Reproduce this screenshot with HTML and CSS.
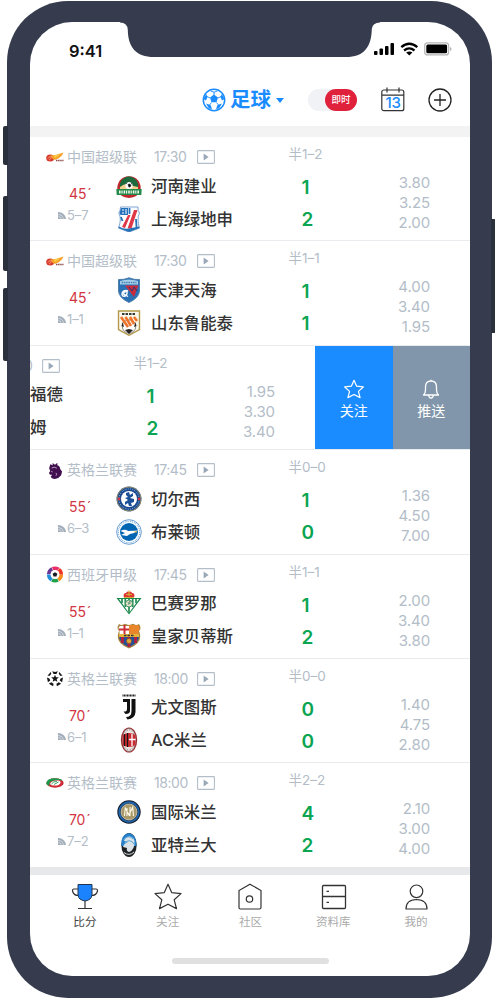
FILE: index.html
```html
<!DOCTYPE html>
<html lang="zh-CN">
<head>
<meta charset="utf-8">
<title>足球比分</title>
<link rel="stylesheet" href="styles.css">
</head>
<body>
<svg class="defs" width="0" height="0" aria-hidden="true">
  <symbol id="play" viewBox="0 0 18 14"><rect x=".6" y=".6" width="16.8" height="12.8" rx=".6" fill="none" stroke="#b4bec9" stroke-width="1.1"/><path d="M6.6 3.6 11.6 7 6.6 10.4z" fill="#98a8b8"/></symbol>
  <symbol id="corner" viewBox="0 0 8 7"><path d="M0 0C4.500 0 7.500 3 8 7H0z" fill="#a3aebb"/><path d="M.3 2.400Q4.500 2.600 5.600 6.800M.3 4.600Q2.800 4.600 3.300 6.800" fill="none" stroke="#fff" stroke-width=".5"/></symbol>
  <symbol id="star" viewBox="0 0 28 27"><path d="M14 1.300 17.700 9.600 27 10.600 20.200 16.800 22.500 25.600 14 21.200 5.500 25.600 7.800 16.800 1 10.600 10.300 9.600z" fill="none" stroke="currentColor" stroke-linejoin="round"/></symbol>
  <symbol id="csl" viewBox="0 0 18 10"><ellipse cx="4.200" cy="6" rx="4" ry="3.600" fill="#d93a2f"/><path d="M4 3.500Q8 4 17.500.5 16 5 10 7.500 7 8.500 6 6z" fill="#f5a32b"/><path d="M2 6.500Q3 4 5.500 5M3 8 5.500 6" stroke="#ffc78a" stroke-width=".7" fill="none"/><path d="M8 3.800 14 2.500 9 5.500z" fill="#ffdf51"/><path d="M10 8.600H17.500" stroke="#8a4b46" stroke-width="1.500" stroke-dasharray="1.500 .6"/></symbol>
  <symbol id="epl" viewBox="0 0 18 18"><path d="M4 2.500 6.500 3.500 6.500 1 9 2.800 11.500.8 11.500 3.500Q14.500 4.500 14.500 7.500L16.500 10 15.500 14Q13 17.500 9 18 5 17.500 4.500 15.500L6 13.500Q2.500 14 2.800 11L4 9.500 2.800 6.500z" fill="#42104f"/><path d="M5.500 6.500Q8 4.500 11 6.500M10 11.500Q11.500 13 10 14.500M5 10 6.500 10.500" stroke="#d9c8de" stroke-width=".8" fill="none"/></symbol>
  <symbol id="laliga" viewBox="0 0 18 18"><g fill="none" stroke-width="4" stroke-dasharray="6.400 34.440"><circle cx="9" cy="9" r="6.500" stroke="#f98b1d"/><circle cx="9" cy="9" r="6.500" stroke="#20a04b" stroke-dashoffset="-6.800"/><circle cx="9" cy="9" r="6.500" stroke="#1d8edb" stroke-dashoffset="-13.600"/><circle cx="9" cy="9" r="6.500" stroke="#663690" stroke-dashoffset="-20.400"/><circle cx="9" cy="9" r="6.500" stroke="#e92e68" stroke-dashoffset="-27.200"/><circle cx="9" cy="9" r="6.500" stroke="#ee3524" stroke-dashoffset="-34"/></g><circle cx="9" cy="9" r="4.700" fill="#fff"/><path d="M9 6.500 11.500 8.300 10.500 11.200H7.500L6.500 8.300z" fill="#191c23"/></symbol>
  <symbol id="ucl" viewBox="0 0 18 18"><g fill="#161616"><path d="m9 5 1.100 2.600 2.900.2-2.200 1.900.7 2.800L9 11l-2.500 1.500.7-2.800L5 7.800l2.900-.2z"/><path d="M6 1.200 9 2.200 12 1.200 10.500 4.200h-3zM13.500 2 17 6 14.500 6 13 4zM4.500 2 1 6 3.500 6 5 4zM17.500 8 16.500 13 14 11 15 9zM.5 8 1.500 13 4 11 3 9zM13 13 15.500 14.500 11 17.200 10.500 14.500zM5 13 2.500 14.500 7 17.200 7.500 14.500z"/></g></symbol>
  <symbol id="seriea" viewBox="0 0 18 10"><ellipse cx="9" cy="5" rx="8.700" ry="4.700" fill="#cf2b37"/><path d="M.3 5Q1 .3 9 .3 15 .5 16.500 2.500 9 1 4 4 3 6 3.500 7.800.3 7 .3 5z" fill="#189b4c"/><path d="M4 6Q5 2.300 12 2.500 15 3 14.500 5 13 8 8 7.500 5 7.500 4 6z" fill="#fff"/><path d="M5.500 6Q7 3.500 11 3.300M8 6.500 12.500 4" stroke="#3aa364" fill="none"/></symbol>

  <symbol id="henan" viewBox="0 0 26 26"><path d="M1.500 17A11.700 11.700 0 1 1 24.500 17Q22 24.500 13 25 4 24.500 1.500 17z" fill="#c1272d"/><path d="M13 3.600A9.300 9.300 0 0 0 4.300 16L21.700 16A9.300 9.300 0 0 0 13 3.600z" fill="#1d6b3c"/><path d="M4 14Q9 10 13 11.500T22 14V17H4z" fill="#f4cf8d"/><circle cx="13" cy="12.500" r="3.600" fill="#fff"/><path d="m12 11.500 2-.5 1 2-2 1.200zM10 11 11.500 9.500M15 9.500 16 11.500" stroke="#242424" stroke-width=".7"/><path d="M.3 16H25.700L25.300 22H.7z" fill="#24884a"/><path d="M3 19H23" stroke="#edf8e8" stroke-width="2.800" stroke-dasharray="1.600 .8 1.200 1"/></symbol>
  <symbol id="shenhua" viewBox="0 0 26 26"><path d="M4.500 1H22Q21.500 5 23.500 7 20.500 13 23.500 22 19 24 13 26 7 24 2.500 22 6 13 2.800 7 4.500 5 4.500 1z" fill="#fff" stroke="#5b91c6" stroke-width=".8"/><path d="M5 2H12V9H4.500L3.500 7z" fill="#2671bd"/><path d="M6 4H8M6 7H8M10 3V8" stroke="#fff"/><path d="m6 21 6-12h2.500L9 22zM11.500 22.500 18 4h3.500L15.500 22.500z" fill="#e13848"/><path d="m5 11 1.500 4M20 13l.5 8M13.500 2v6" stroke="#2872bb" stroke-width="1.800"/><path d="M3 20.500Q8 23.500 13 22.500T23 20.500L23.500 22 13 26 2.500 22z" fill="#2771b7"/></symbol>
  <symbol id="tianhai" viewBox="0 0 26 26"><path d="M2.500 2.500Q8 3 13 .8 18 3 23.500 2.500V14Q23 21 13 25.500 3 21 2.500 14z" fill="#2a70b5" stroke="#5180a9"/><path d="M4 4Q13 1 22 4V7.500H4z" fill="#a6d0ea"/><path d="M5.500 5.500H20.500" stroke="#4b83b4" stroke-width="1.300" stroke-dasharray="1.600 .7"/><path d="M9 8.500H22.500L18 20z" fill="#c92d3d"/><path d="m13 10 3 4 2-4 3 4" fill="none" stroke="#293675"/><path d="M12 14C9 12.500 6 14 6 17S10 20 11 16.500 7.500 14.500 7.500 17l4.500 2.500" fill="none" stroke="#fff" stroke-width="1.400"/></symbol>
  <symbol id="luneng" viewBox="0 0 26 26"><path d="M2.500 1H23.500V19.500L13 25.300 2.500 19.500z" fill="#faf8eb" stroke="#b39a4c" stroke-width="1.400"/><path d="M6 4H20" stroke="#353a3b" stroke-width="2.200" stroke-dasharray="2.500 1"/><circle cx="13" cy="16.500" r="6.700" fill="#fff" stroke="#444" stroke-width=".6"/><path d="M6.500 12 8 17 5.500 16zM19.500 12 18 17 20.500 16zM9 20l4-1 4 1-4 4z" fill="#292322"/><path d="m5 7 7 10M9.500 7l5.500 9M14 7l4 7M18 7l3 4" fill="none" stroke="#ee742c" stroke-width="2.600"/></symbol>
  <symbol id="chelsea" viewBox="0 0 26 26"><circle cx="13" cy="13" r="12.500" fill="#194a90"/><circle cx="13" cy="13" r="12" fill="none" stroke="#c7a85a" stroke-width=".7"/><circle cx="13" cy="13" r="10.100" fill="none" stroke="#a9bddc" stroke-width="1" stroke-dasharray="1 1.300"/><circle cx="13" cy="13" r="8" fill="#fff"/><path d="m10 7 3-1 1 3 3-2v3l-3 2 4 1v3l-3 1 1 3h-3l-1-3-3 2v-3l3-2-3-2 3-1-2-2z" fill="#1b5099"/><circle cx="3" cy="13" r="1.400" fill="#cf3344"/><circle cx="23" cy="13" r="1.400" fill="#cf3344"/></symbol>
  <symbol id="brighton" viewBox="0 0 26 26"><circle cx="13" cy="13" r="12.300" fill="#fff" stroke="#2871bf" stroke-width=".7"/><circle cx="13" cy="13" r="10.700" fill="none" stroke="#78acdb" stroke-width="1.100" stroke-dasharray="1 .9"/><circle cx="13" cy="13" r="9" fill="#0066b3"/><path d="M4.500 12Q9 9.500 12 12L22 11.500 18 14 14 15 11 17 5 16 9 14z" fill="#fff"/><path d="m18 13 3-.2" stroke="#e3b342"/></symbol>
  <symbol id="betis" viewBox="0 0 26 26"><path d="M.5 8H25.500L13 24.500z" fill="#19864b"/><path d="M3 9H23L13 23z" fill="#fff"/><path d="M6 9v4M9.300 9v8M13 9v14M16.700 9v8M20 9v4" stroke="#258c50" stroke-width="1.700"/><circle cx="13" cy="13.500" r="3.500" fill="#e8e2ca" stroke="#238a52" stroke-width=".8"/><path d="m11.500 12 2.500 2v-3l-2 4" fill="none" stroke="#4b8065" stroke-width=".7"/><path d="M8 7.500Q6.500 3 10 3 11 .5 13 2 15 .5 16 3 19.500 3 18 7.500z" fill="#dc3833"/><path d="M8 7.500H18M10 4.500H16M13 .5V6" stroke="#dda936" stroke-width="1.200"/></symbol>
  <symbol id="barca" viewBox="0 0 26 26"><path d="M3 1Q6 3 9 .8 13 3 17 .8 20 3 23 1 26 5 23 8 28 20 13 25.500-2 20 3 8 0 5 3 1z" fill="#a7843f"/><path d="M4 3H13V11H3.500V8Q1.500 5 4 3z" fill="#fff"/><path d="M8.500 2V11M3 6.500H13" stroke="#ce2d35" stroke-width="2"/><path d="M13 2H22Q25 5 22.500 8V11H13z" fill="#e9852b"/><path d="M3 13H23Q23 20 13 24 3 20 3 13z" fill="#20519b"/><path d="M6.500 13v7M13 13v11M19.500 13v7" stroke="#ac2244" stroke-width="3"/><path d="M3 11H23V14H3z" fill="#e3b33b"/><path d="M8 12.500H18" stroke="#333" stroke-width="1.500" stroke-dasharray="2.500 1"/><circle cx="13" cy="18" r="2.600" fill="#e1a637" stroke="#704a2d" stroke-width=".6"/></symbol>
  <symbol id="juve" viewBox="0 0 26 26"><path d="M6.500 1.500H19.500" stroke="#252525" stroke-width="2" stroke-dasharray="1.100 .4"/><path d="M7 5H14V17Q14 20 9.500 20L7.500 17.500Q11 18 11 15V8H7z" fill="#111"/><path d="M15.500 5H19.500V18Q19 25 11.500 25.500L10 23Q15.500 23 15.500 17z" fill="#111"/></symbol>
  <symbol id="milan" viewBox="0 0 26 26"><ellipse cx="13" cy="13" rx="8.200" ry="12.600" fill="#a42a2c"/><ellipse cx="13" cy="13" rx="7" ry="11.500" fill="#efe6e4" stroke="#444" stroke-width=".5"/><ellipse cx="13" cy="13" rx="5.900" ry="10" fill="none" stroke="#8c8280" stroke-width="1" stroke-dasharray="1.200 1.500"/><path d="M6.500 8Q13 4 19.500 8V18Q13 22 6.500 18z" fill="#c9292f"/><path d="M8.500 7v12M11.500 6v14" stroke="#171717" stroke-width="1.200"/><path d="M16 7v12M13 12.500h6.500" stroke="#fff" stroke-width="1.300"/></symbol>
  <symbol id="inter" viewBox="0 0 26 26"><circle cx="13" cy="13" r="11.700" fill="#151c29"/><circle cx="13" cy="13" r="9.700" fill="none" stroke="#2065ad" stroke-width="1.900"/><circle cx="13" cy="13" r="8" fill="#a9986a" stroke="#e6dfc4" stroke-width=".7"/><path d="m8.500 17 .8-8 3.700 7 3.700-8 .8 9M14 8v9M11 9v8" fill="none" stroke="#fff9e8" stroke-width="1.100"/></symbol>
  <symbol id="atalanta" viewBox="0 0 26 26"><ellipse cx="13" cy="13" rx="7.700" ry="12" fill="#202326"/><path d="M5.300 14Q5 2 13 1.100 20 2 20.700 14z" fill="#2580cc"/><path d="M8 9Q9 5 13 4.500 17.500 4.500 18.500 9 19 18 13 20 10 19 11 16L7 15Q8 11 12 10z" fill="#dce3e8"/><path d="M7.500 8Q12 2 17.500 7M9 11Q14 6 18 12" fill="none" stroke="#67a9d5" stroke-width="1.200"/><path d="M8 20.500Q13 24.500 18 20" stroke="#ddd" fill="none"/></symbol>
</svg>

<div class="stage">
  <i class="key key-mute"></i><i class="key key-up"></i><i class="key key-down"></i><i class="key key-power"></i>
  <div class="phone">
    <main class="screen">
      <svg class="notch" viewBox="0 0 260 36" aria-hidden="true"><path d="M0 0H260V.5Q252.500.5 251.800 7C251.500 25 244 35 226 35H34C16 35 8 25 7.800 8Q7.500.5 0 .5z"/></svg>
      <div class="status">
        <span class="clock">9:41</span>
        <svg class="status-icons" viewBox="0 0 78 14"><g fill="#000"><rect y="9" width="3.500" height="4" rx="1"/><rect x="5.500" y="6.500" width="3.500" height="6.500" rx="1"/><rect x="11" y="4" width="3.500" height="9" rx="1"/><rect x="16.500" y="1" width="3.500" height="12" rx="1"/><path d="M32.200 10.600Q35.300 8.400 38.400 10.600L35.300 13.400z"/></g><path d="M27.300 5.200Q35.300-1.700 43.300 5.200M30.100 8.500Q35.300 4.200 40.500 8.500" fill="none" stroke="#000" stroke-width="2.300"/><rect x="50.700" y=".9" width="24" height="12" rx="3" fill="#fff" stroke="#b5b5b5" stroke-width="1.200"/><rect x="52.300" y="2.500" width="20.800" height="8.800" rx="1.500"/><path d="M76 5q1.600.4 1.600 2T76 9z" fill="#b5b5b5"/></svg>
      </div>
      <header class="bar">
        <svg class="ball" viewBox="0 0 24 24"><circle cx="12" cy="12" r="10.700" fill="#fff" stroke="#1a8cff" stroke-width="1.500"/><path d="M8.500 3 12 4.200 15.500 3M12 4V7M16 10l3-1.500M14.500 14.500l2 2.500M9.500 14.500l-2 2.500M8 10 5 8.500" fill="none" stroke="#1a8cff" stroke-width=".9"/><path d="m12 6.500 4 3-1.500 4.800h-5L8 9.500zM19.800 6l2.700 5-2.500 1.500-1.500-3.500zM4.200 6l-2.700 5L4 12.500 5.500 9zM15.500 17l4.500-1.500L17 20.500 14 21zM8.500 17l-4.500-1.500L7 20.500l3 .5z" fill="#1a8cff"/></svg>
        <span class="sport">足球</span><i class="caret"></i>
        <span class="toggle"><b>即时</b></span>
        <span class="calendar"><svg viewBox="0 0 24 25"><rect x=".8" y="3" width="22" height="20.700" rx="2" fill="none" stroke="#333" stroke-width="1.200"/><path d="M1 8.200H23M6 .5V5.500M18 .5V5.500" stroke="#333" stroke-width="1.200"/></svg><em>13</em></span>
        <svg class="plus" viewBox="0 0 24 24"><circle cx="12" cy="12" r="11" fill="none" stroke="#222" stroke-width="1.300"/><path d="M6 12H18M12 6V18" stroke="#222" stroke-width="1.300"/></svg>
      </header>
      <section class="matches">
        <article class="match"><div class="card">
          <div class="info"><div class="league"><svg class="badge flat"><use href="#csl"/></svg><span class="lname">中国超级联</span><time>17:30</time><svg class="play"><use href="#play"/></svg></div>
            <div class="fixture"><div class="live"><b>45<i>´</i></b><span><svg><use href="#corner"/></svg>5–7</span></div><div class="teams"><p><svg><use href="#henan"/></svg>河南建业</p><p><svg><use href="#shenhua"/></svg>上海绿地申</p></div></div></div>
          <div class="score"><span>半1–2</span><b>1</b><b>2</b></div><div class="odds"><span>3.80</span><span>3.25</span><span>2.00</span></div>
        </div></article>
        <article class="match"><div class="card">
          <div class="info"><div class="league"><svg class="badge flat"><use href="#csl"/></svg><span class="lname">中国超级联</span><time>17:30</time><svg class="play"><use href="#play"/></svg></div>
            <div class="fixture"><div class="live"><b>45<i>´</i></b><span><svg><use href="#corner"/></svg>1–1</span></div><div class="teams"><p><svg><use href="#tianhai"/></svg>天津天海</p><p><svg><use href="#luneng"/></svg>山东鲁能泰</p></div></div></div>
          <div class="score"><span>半1–1</span><b>1</b><b>1</b></div><div class="odds"><span>4.00</span><span>3.40</span><span>1.95</span></div>
        </div></article>
        <article class="match swiped"><div class="card">
          <div class="info"><div class="league"><time>0</time><svg class="play"><use href="#play"/></svg></div>
            <div class="fixture"><div class="teams"><p>福德</p><p>姆</p></div></div></div>
          <div class="score"><span>半1–2</span><b>1</b><b>2</b></div><div class="odds"><span>1.95</span><span>3.30</span><span>3.40</span></div></div>
          <div class="action follow"><svg viewBox="0 0 28 27"><use href="#star"/></svg>关注</div>
          <div class="action push"><svg viewBox="0 0 18 20"><path d="M1.500 16Q3.500 14 3.500 11V8Q3.500 2 9 2T14.500 8V11Q14.500 14 16.500 16zM9 2V.8M6.700 16.500Q7 19 9 19T11.300 16.500" fill="none" stroke="#fff" stroke-width="1.300" stroke-linejoin="round"/></svg>推送</div>
        </article>
        <article class="match"><div class="card">
          <div class="info"><div class="league"><svg class="badge"><use href="#epl"/></svg><span class="lname">英格兰联赛</span><time>17:45</time><svg class="play"><use href="#play"/></svg></div>
            <div class="fixture"><div class="live"><b>55<i>´</i></b><span><svg><use href="#corner"/></svg>6–3</span></div><div class="teams"><p><svg><use href="#chelsea"/></svg>切尔西</p><p><svg><use href="#brighton"/></svg>布莱顿</p></div></div></div>
          <div class="score"><span>半0–0</span><b>1</b><b>0</b></div><div class="odds"><span>1.36</span><span>4.50</span><span>7.00</span></div>
        </div></article>
        <article class="match"><div class="card">
          <div class="info"><div class="league"><svg class="badge"><use href="#laliga"/></svg><span class="lname">西班牙甲级</span><time>17:45</time><svg class="play"><use href="#play"/></svg></div>
            <div class="fixture"><div class="live"><b>55<i>´</i></b><span><svg><use href="#corner"/></svg>1–1</span></div><div class="teams"><p><svg><use href="#betis"/></svg>巴赛罗那</p><p><svg><use href="#barca"/></svg>皇家贝蒂斯</p></div></div></div>
          <div class="score"><span>半1–1</span><b>1</b><b>2</b></div><div class="odds"><span>2.00</span><span>3.40</span><span>3.80</span></div>
        </div></article>
        <article class="match"><div class="card">
          <div class="info"><div class="league"><svg class="badge"><use href="#ucl"/></svg><span class="lname">英格兰联赛</span><time>18:00</time><svg class="play"><use href="#play"/></svg></div>
            <div class="fixture"><div class="live"><b>70<i>´</i></b><span><svg><use href="#corner"/></svg>6–1</span></div><div class="teams"><p><svg><use href="#juve"/></svg>尤文图斯</p><p><svg><use href="#milan"/></svg>AC米兰</p></div></div></div>
          <div class="score"><span>半0–0</span><b>0</b><b>0</b></div><div class="odds"><span>1.40</span><span>4.75</span><span>2.80</span></div>
        </div></article>
        <article class="match"><div class="card">
          <div class="info"><div class="league"><svg class="badge flat"><use href="#seriea"/></svg><span class="lname">英格兰联赛</span><time>18:00</time><svg class="play"><use href="#play"/></svg></div>
            <div class="fixture"><div class="live"><b>70<i>´</i></b><span><svg><use href="#corner"/></svg>7–2</span></div><div class="teams"><p><svg><use href="#inter"/></svg>国际米兰</p><p><svg><use href="#atalanta"/></svg>亚特兰大</p></div></div></div>
          <div class="score"><span>半2–2</span><b>4</b><b>2</b></div><div class="odds"><span>2.10</span><span>3.00</span><span>4.00</span></div>
        </div></article>
      </section>
      <nav class="tabs">
        <a class="active"><svg viewBox="0 0 28 28"><path d="M7 6H3Q1.300 6 1.500 8 2.500 12.500 7.500 12.500M21 6H25Q26.700 6 26.500 8 25.500 12.500 20.500 12.500M14 18V25.500M7 25.500H21" fill="none" stroke="#333" stroke-width="1.200"/><path d="M7 1.500H21V12Q20.500 17 14 18 7.500 17 7 12z" fill="#1a83fd" stroke="#24364d" stroke-width="1"/></svg>比分</a>
        <a><svg viewBox="0 0 28 28"><use href="#star" width="28" height="27"/></svg>关注</a>
        <a><svg viewBox="0 0 28 28"><path d="M14 1.300 25 7.500V24.500Q25 26 23.500 26H4.500Q3 26 3 24.500V7.500z" fill="none" stroke="#333" stroke-width="1.200"/><circle cx="13.500" cy="16" r="3.200" fill="none" stroke="#333" stroke-width="1.200"/></svg>社区</a>
        <a><svg viewBox="0 0 28 28"><path d="M4.500 2.500H25.500Q26.500 2.500 26.500 3.500V24.500Q26.500 25.500 25.500 25.500H4.500Q3.500 25.500 3.500 24.500V3.500Q3.500 2.500 4.500 2.500zM3.500 13.500H26.500M7.500 8.300H10M7.500 19.300H10" fill="none" stroke="#333" stroke-width="1.300"/></svg>资料库</a>
        <a><svg viewBox="0 0 28 28"><circle cx="14.500" cy="8.300" r="6.300" fill="none" stroke="#333" stroke-width="1.200"/><path d="M4 26Q4 16.800 14.500 16.500 25 16.800 25 26z" fill="none" stroke="#333" stroke-width="1.200" stroke-linejoin="round"/></svg>我的</a>
      </nav>
      <div class="home"></div>
    </main>
  </div>
</div>
</body>
</html>
```

FILE: styles.css
```css
* { box-sizing: border-box; }
body { margin: 0; background: #fff; font-family: Inter, "Noto Sans CJK SC", sans-serif; }
p { margin: 0; }
svg { display: block; flex: none; }
.defs { position: absolute; }
.stage { position: relative; width: 495px; height: 1002px; padding: 1px 3px 4px 7px; overflow: hidden; }
.phone { width: 485px; height: 997px; padding: 21px 22px 22px 23px; background: #363c4e; border-radius: 61px; }
.screen { position: relative; height: 954px; background: #fff; border-radius: 42px; overflow: hidden; display: flex; flex-direction: column; }
.key { position: absolute; left: 3px; width: 5px; background: #2b303d; border-radius: 2px 0 0 2px; }
.key-mute { top: 126px; height: 39px; }
.key-up { top: 196px; height: 75px; }
.key-down { top: 288px; height: 73px; }
.key-power { left: 491px; top: 219px; height: 114px; border-radius: 0 2px 2px 0; }
.notch { position: absolute; left: 90px; top: 0; width: 260px; height: 36px; fill: #363c4e; }

.status { height: 52px; padding: 20px 18px 0 39px; display: flex; justify-content: space-between; }
.clock { font-size: 16.500px; font-weight: 600; line-height: 18px; color: #111; }
.status-icons { width: 78px; height: 14px; }
.bar { height: 52px; padding-left: 172px; display: flex; align-items: center; }
.ball { width: 24px; height: 24px; }
.sport { margin-left: 4px; font-size: 20.500px; font-weight: 700; line-height: 28px; color: #1a8cff; }
.caret { margin-left: 5px; border: 4px solid transparent; border-top: 5px solid #1a8cff; border-bottom: 0; }
.toggle { width: 49px; height: 22px; margin-left: 24px; padding-left: 17px; border-radius: 11px; background: #f0f2f6; }
.toggle b { display: block; height: 22px; border-radius: 11px; background: #e0213b; color: #fff; font-size: 9.500px; font-weight: 500; line-height: 22px; text-align: center; }
.calendar { display: grid; width: 24px; height: 25px; margin: -1px 0 0 24px; }
.calendar svg, .calendar em { grid-area: 1 / 1; }
.calendar em { padding-top: 7px; font: 500 15px/18px Inter, sans-serif; letter-spacing: -.2px; text-align: center; color: #1a8cff; }
.plus { width: 24px; height: 24px; margin-left: 23px; }

.matches { border-top: 11px solid #f3f3f3; border-bottom: 8px solid #e7e8ea; }
.match { display: flex; height: 104.400px; border-bottom: 1px solid #e9ebee; overflow: hidden; }
.match:last-child { height: 103.600px; border-bottom: 0; }
.card { display: flex; flex: none; width: 440px; color: #b3bdc8; font-weight: 400; }
.info { width: 258px; padding-top: 10px; }
.league { display: flex; align-items: center; height: 20px; padding-left: 16px; font-size: 14px; line-height: 20px; }
.badge { width: 18px; height: 17px; }
.badge.flat { height: 10px; }
.lname { width: 70px; margin-left: 3px; white-space: nowrap; }
.league time { width: 35px; margin-left: 17px; letter-spacing: -.45px; white-space: nowrap; }
.play { width: 18px; height: 14px; margin-left: 8px; }
.fixture { display: flex; padding-top: 2px; }
.live { width: 86px; padding-top: 15px; }
.live b { display: block; height: 20px; padding-left: 39px; font-size: 14px; font-weight: 400; line-height: 20px; letter-spacing: -.1px; color: #d2363f; }
.live i { margin-left: 1px; font-style: normal; }
.live span { display: flex; align-items: center; gap: 1px; height: 20px; padding: 2px 0 0 28px; font-size: 13px; line-height: 20px; letter-spacing: -.1px; }
.live svg { width: 8px; height: 7px; }
.teams p { display: flex; align-items: center; gap: 9px; height: 33px; font-size: 16.400px; font-weight: 500; line-height: 24px; color: #333; white-space: nowrap; }
.teams svg { width: 26px; height: 26px; }
.score { width: 70px; padding-top: 7px; }
.score span, .score b { display: block; }
.score span { height: 20px; margin-bottom: 8px; padding-left: .5px; font-size: 13.500px; line-height: 20px; white-space: nowrap; }
.score b { height: 32px; padding-left: 13.500px; font-size: 19px; font-weight: 600; line-height: 32px; color: #0ba552; }
.odds { display: flex; flex: 1; flex-direction: column; align-items: flex-end; padding: 36px 40px 0 0; font-size: 15px; line-height: 20px; letter-spacing: -.1px; }
.swiped .card { width: 285px; }
.swiped .info { width: 103px; }
.swiped .league { padding-left: 0; }
.swiped .league time { width: 5px; margin: 0 0 0 -1px; text-indent: -5px; }
.action { display: flex; flex: none; flex-direction: column; align-items: center; width: 77.500px; padding-top: 33px; font-size: 14px; line-height: 22px; color: #fff; }
.action svg { width: 20px; height: 20px; margin-bottom: 1px; stroke-width: 1.700; }
.follow { background: #1a8cff; }
.push { background: #8196aa; }

.tabs { display: flex; height: 68px; padding: 8px 12.500px 0 13.500px; }
.tabs a { flex: 1; display: flex; flex-direction: column; align-items: center; font-size: 11.600px; line-height: 18px; color: #aaa; }
.tabs svg { width: 28px; height: 28px; margin-bottom: 2px; color: #333; stroke-width: 1.200; }
.tabs .active { color: #444; }
.home { width: 157px; height: 6px; margin: 15px 0 0 142px; border-radius: 3px; background: #e0e0e0; }
```
